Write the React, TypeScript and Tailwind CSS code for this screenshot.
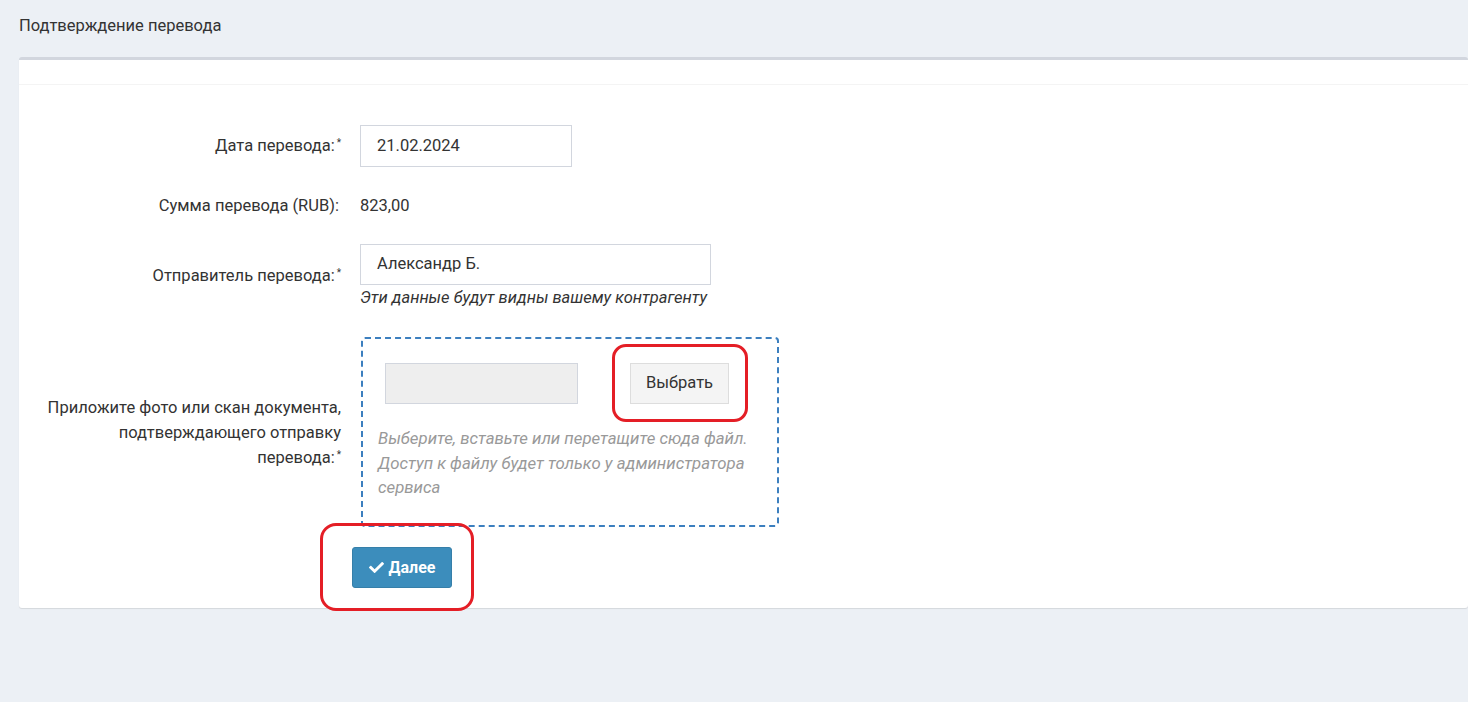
import { FaCheck } from 'react-icons/fa';

export default function App() {
  return (
    <div className="relative min-h-[702px] bg-[#ecf0f5] text-[#333] font-['Source_Sans_Pro','Roboto',sans-serif] text-[16.5px]">
      {/* Page title */}
      <div className="h-[57px] pl-[19px] pt-[14px] text-[16.5px] text-[#333]">Подтверждение перевода</div>

      {/* Box */}
      <div className="ml-[19px] bg-white border-t-[3px] border-[#d2d6de] rounded-[3px] shadow-[0_1px_1px_rgba(0,0,0,0.1)]">
        <div className="h-[25px] border-b border-[#f4f4f4]" />

        <div className="pt-[40px] pb-[20px]">
          {/* Date */}
          <div className="flex items-center">
            <label className="w-[322px] text-right">
              Дата перевода:<sup className="text-[10px] ml-[2px]">*</sup>
            </label>
            <div className="ml-[19px]">
              <div className="w-[212px] h-[42px] border border-[#d2d6de] px-[16px] flex items-center">21.02.2024</div>
            </div>
          </div>

          {/* Sum */}
          <div className="flex items-center mt-[27px] h-[24px]">
            <label className="w-[322px] text-right pr-[2px]">Сумма перевода (RUB):</label>
            <div className="ml-[19px]">823,00</div>
          </div>

          {/* Sender */}
          <div className="flex items-center mt-[26px]">
            <label className="w-[322px] text-right">
              Отправитель перевода:<sup className="text-[10px] ml-[2px]">*</sup>
            </label>
            <div className="ml-[19px]">
              <div className="w-[351px] h-[41px] border border-[#d2d6de] px-[16px] flex items-center">Александр Б.</div>
              <div className="italic mt-[2px] leading-[22px]">Эти данные будут видны вашему контрагенту</div>
            </div>
          </div>

          {/* File */}
          <div className="flex items-center mt-[28px]">
            <label className="w-[322px] text-right leading-[25px]">
              Приложите фото или скан документа,
              <br />
              подтверждающего отправку
              <br />
              перевода:<sup className="text-[10px] ml-[2px]">*</sup>
            </label>
            <div className="ml-[20px] w-[418px] h-[190px] border-2 border-dashed border-[#3c7fbf] rounded-[4px] pt-[24px] pl-[22px] pr-[8px]">
              <div className="flex items-center">
                <div className="w-[193px] h-[41px] bg-[#eeeeee] border border-[#d2d6de]" />
                <button className="ml-[52px] w-[99px] h-[41px] bg-[#f4f4f4] border border-[#dddddd] text-[#333] text-[16.5px]">Выбрать</button>
              </div>
              <div className="mt-[22px] -ml-[7px] italic text-[#999] leading-[24.5px] text-[16.8px]">
                Выберите, вставьте или перетащите сюда файл. Доступ к файлу будет только у администратора сервиса
              </div>
            </div>
          </div>

          {/* Next */}
          <div className="mt-[20px] pl-[333px]">
            <button className="w-[100px] h-[41px] bg-[#3c8dbc] border border-[#367fa9] rounded-[3px] text-white font-bold text-[16px] flex items-center justify-center gap-[5px]">
              <FaCheck className="w-[15px] h-[15px]" />
              Далее
            </button>
          </div>
        </div>
      </div>

      {/* Annotation marks */}
      <div className="absolute left-[612px] top-[344px] w-[136px] h-[78px] border-[3px] border-[#e41e26] rounded-[14px]" />
      <div className="absolute left-[320px] top-[523px] w-[154px] h-[88px] border-[3px] border-[#e41e26] rounded-[16px]" />
    </div>
  );
}
